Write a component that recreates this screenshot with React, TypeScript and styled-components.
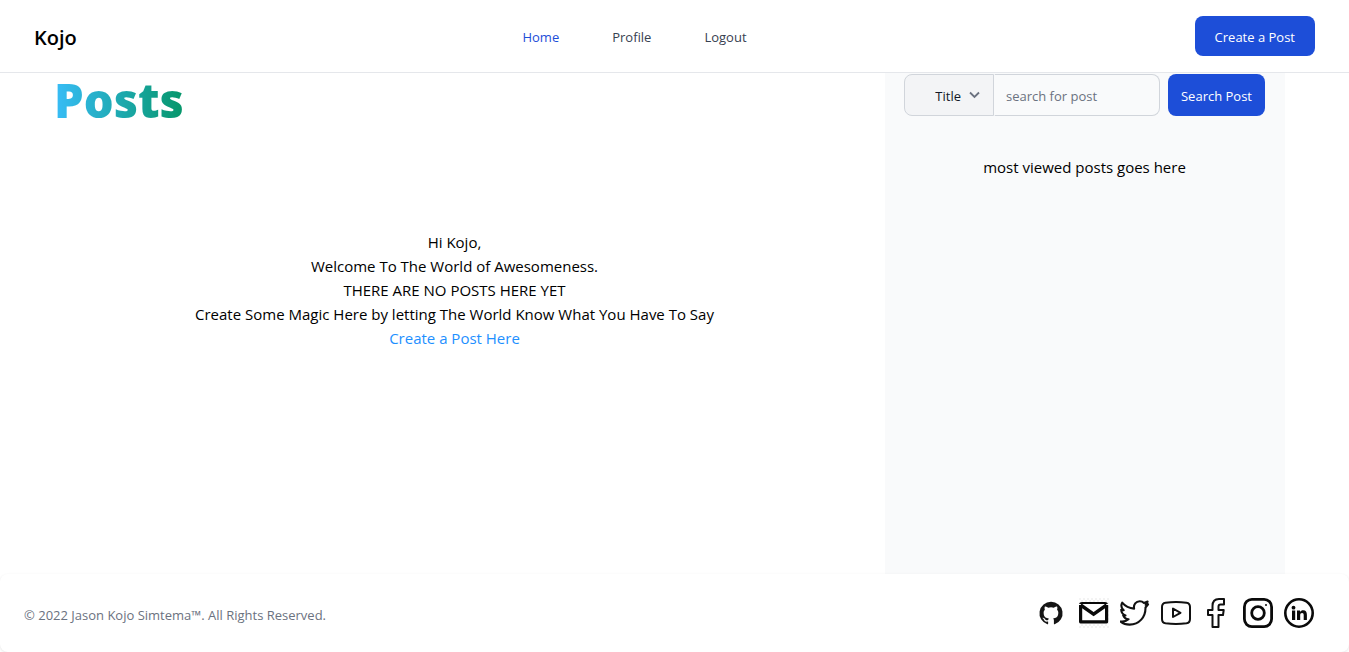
import React from "react";
import styled, { createGlobalStyle } from "styled-components";

const GlobalStyle = createGlobalStyle`
  *, *::before, *::after { box-sizing: border-box; }
  body {
    margin: 0;
    background: #fff;
    color: #000;
    font-family: "Segoe UI", "Open Sans", "Noto Sans", sans-serif;
    font-size: 15px;
    line-height: 24px;
  }
  a { text-decoration: none; color: inherit; }
  h1, p, ul { margin: 0; padding: 0; }
  button, input, select { font: inherit; margin: 0; }
`;

const Page = styled.div`
  display: flex;
  flex-direction: column;
  min-height: 100vh;
`;

const Header = styled.header`
  display: grid;
  grid-template-columns: 1fr auto 1fr;
  align-items: center;
  padding: 16px 34px;
  border-bottom: 1px solid #e5e7eb;
`;

const Brand = styled.a`
  padding-top: 4px;
  font-size: 20px;
  line-height: 28px;
  font-weight: 600;
  justify-self: start;
`;

const NavList = styled.ul`
  display: flex;
  gap: 53px;
  padding-right: 80px;
  list-style: none;
`;

const NavLink = styled.a<{ $active?: boolean }>`
  font-size: 13px;
  color: ${(p) => (p.$active ? "#1d4ed8" : "#374151")};
`;

const PrimaryButton = styled.button<{ $pad: number }>`
  min-height: 40px;
  padding: 2px ${(p) => p.$pad}px 0;
  border: 0;
  border-radius: 8px;
  background: #1d4ed8;
  color: #fff;
  font-size: 13px;
  line-height: 20px;
  white-space: nowrap;
  justify-self: end;
`;

const Main = styled.main`
  flex: 1;
  display: flex;
  padding: 0 64px 0 24px;
`;

const Feed = styled.section`
  flex: 1;
`;

const Title = styled.h1`
  width: fit-content;
  margin-left: 30px;
  font-size: 47px;
  line-height: 54px;
  font-weight: 800;
  color: transparent;
  background: linear-gradient(to right, #38bdf8, #059669);
  background-clip: text;
  -webkit-background-clip: text;
`;

const Welcome = styled.div`
  margin-top: 103px;
  text-align: center;
`;

const PostLink = styled.a`
  color: #1e90ff;
`;

const Sidebar = styled.aside`
  width: 400px;
  padding: 1px 20px 0 19px;
  background: #f9fafb;
  text-align: center;
`;

const SearchForm = styled.form`
  display: flex;
  margin-bottom: 39px;
`;

const SelectWrap = styled.div`
  display: grid;
  align-items: center;
  width: 90px;
  & > * { grid-area: 1 / 1; }
  svg { justify-self: end; margin-right: 12px; pointer-events: none; }
`;

const Select = styled.select`
  appearance: none;
  width: 100%;
  height: 42px;
  padding: 2px 32px 0 12px;
  border: 1px solid #d1d5db;
  border-radius: 8px 0 0 8px;
  background: #f3f4f6;
  color: #111827;
  font-size: 13px;
  text-align: right;
  text-align-last: right;
`;

const SearchInput = styled.input`
  flex: 1;
  min-width: 0;
  height: 42px;
  margin-right: 8px;
  padding: 2px 11px 0;
  border: 1px solid #d1d5db;
  border-left-color: #f9fafb;
  border-radius: 0 8px 8px 0;
  background: #f9fafb;
  font-size: 13px;
  &::placeholder { color: #6b7280; opacity: 1; }
`;

const Footer = styled.footer`
  display: flex;
  align-items: center;
  justify-content: space-between;
  min-height: 78px;
  padding: 0 35px 0 24px;
  border-radius: 8px;
  background: #fff;
  box-shadow: 0 1px 3px rgba(0, 0, 0, 0.1);
`;

const Copyright = styled.span`
  padding-top: 4px;
  font-size: 13px;
  line-height: 20px;
  color: #6b7280;
`;

const Social = styled.ul`
  display: flex;
  gap: 11px;
  list-style: none;
  svg { display: block; }
`;

const socials = [
  {
    name: "GitHub",
    art: (
      <path transform="translate(1.500 3.500) scale(.96)" fill="#151515" d="M12 .3a12 12 0 0 0-3.8 23.4c.6.1.8-.3.8-.6v-2.2c-3.3.7-4-1.4-4-1.4-.6-1.4-1.4-1.8-1.4-1.8-1-.7.1-.7.1-.7 1.2 0 1.9 1.2 1.9 1.2 1 1.8 2.8 1.3 3.5 1 0-.8.4-1.3.7-1.6-2.7-.3-5.5-1.3-5.5-6 0-1.2.5-2.3 1.3-3.1-.2-.4-.6-1.6 0-3.2 0 0 1-.3 3.4 1.2a11.5 11.5 0 0 1 6 0c2.300-1.500 3.300-1.200 3.300-1.200.6 1.600.2 2.800 0 3.200.9.8 1.300 1.900 1.300 3.200 0 4.600-2.800 5.600-5.500 5.900.5.4.9 1 .9 2.200v3.300c0 .3.1.7.8.6A12 12 0 0 0 12 .3" />
    ),
  },
  {
    name: "Email",
    art: (
      <>
        <defs>
          <pattern id="checks" width="4" height="4" patternUnits="userSpaceOnUse">
            <path d="M0 0h2v2H0zM2 2h2v2H2z" fill="#f3f3f3" />
          </pattern>
        </defs>
        <rect width="30" height="30" fill="url(#checks)" />
        <rect x="0" y="4" width="29" height="21.500" rx="2" fill="#fff" />
        <path d="M3 4h23q2.500 0 3 2H0Q.5 4 3 4z" fill="#0a0a0a" />
        <path d="M1.600 7v16.800h26V7" fill="none" stroke="#0a0a0a" strokeWidth="3.200" strokeLinejoin="round" />
        <path d="M1.600 7 14.600 16.200 27.600 7" fill="none" stroke="#0a0a0a" strokeWidth="3.400" />
      </>
    ),
  },
  {
    name: "Twitter",
    art: (
      <path d="M1.500 23.500c3 .4 5.800-.300 8-2.200-2.500-.200-4.500-1.700-5.300-3.900h2.300C4 16.500 2.300 14.300 2.200 11.700l2.500.600C2.500 10.300 1.800 7.300 3.200 4.700c3 3.600 7.100 5.700 11.900 5.900C14.300 6.500 17 3.200 20.700 3.200c1.700 0 3.200.700 4.300 1.800l3.600-1.400-1.900 3.200 2.400-.500-2.600 3.200c.200 9.600-6.300 17.100-15.900 17.100-3.400 0-6.500-1-9.100-3.100z" transform="translate(-1 0)" fill="none" stroke="#111" strokeWidth="2.100" strokeLinejoin="round" />
    ),
  },
  {
    name: "YouTube",
    art: (
      <g fill="none" stroke="#111" strokeWidth="2" strokeLinejoin="round">
        <path d="M4.500 4.700Q15 3.500 25.500 4.700Q29 5.200 29 9v12q0 3.800-3.500 4.300Q15 26.500 4.500 25.300Q1 24.800 1 21V9q0-3.800 3.500-4.300z" />
        <path d="M12 10.500v8.500l7.500-4.200z" />
      </g>
    ),
  },
  {
    name: "Facebook",
    art: (
      <path d="M10.500 29V17H6v-5h4.500V8C10.500 3.500 13 1 17 1h5v5.500h-3.500c-1.500 0-2 .7-2 2V12h5.200l-.7 5h-4.500v12z" fill="none" stroke="#111" strokeWidth="2" strokeLinejoin="round" />
    ),
  },
  {
    name: "Instagram",
    art: (
      <g fill="none" stroke="#0a0a0a" strokeWidth="2.800">
        <rect x="1.400" y="1.400" width="27.200" height="27.200" rx="7.500" />
        <circle cx="15" cy="15" r="6.300" />
        <circle cx="23" cy="7" r="1" fill="#0a0a0a" stroke="none" />
      </g>
    ),
  },
  {
    name: "LinkedIn",
    art: (
      <>
        <circle cx="15" cy="15" r="13.700" fill="none" stroke="#0a0a0a" strokeWidth="2.600" />
        <g fill="#0a0a0a">
          <circle cx="9.500" cy="9.700" r="1.900" />
          <rect x="8" y="12.500" width="3.200" height="9.500" />
          <path d="M13 12.500h3v1.400c.7-1.100 1.800-1.700 3.200-1.700 2.700 0 3.700 1.800 3.700 4.500V22h-3.200v-4.800c0-1.400-.4-2.300-1.600-2.300-1.300 0-1.900.9-1.900 2.300V22H13z" />
        </g>
      </>
    ),
  },
];

export default function App() {
  return (
    <Page>
      <GlobalStyle />
      <Header>
        <Brand href="#">Kojo</Brand>
        <nav>
          <NavList>
            <li><NavLink href="#" $active>Home</NavLink></li>
            <li><NavLink href="#profile">Profile</NavLink></li>
            <li><NavLink href="#logout">Logout</NavLink></li>
          </NavList>
        </nav>
        <PrimaryButton type="button" $pad={20}>Create a Post</PrimaryButton>
      </Header>
      <Main>
        <Feed>
          <Title>Posts</Title>
          <Welcome>
            <p>Hi Kojo,</p>
            <p>Welcome To The World of Awesomeness.</p>
            <p>THERE ARE NO POSTS HERE YET</p>
            <p>Create Some Magic Here by letting The World Know What You Have To Say</p>
            <PostLink href="#create">Create a Post Here</PostLink>
          </Welcome>
        </Feed>
        <Sidebar>
          <SearchForm onSubmit={(e) => e.preventDefault()}>
            <SelectWrap>
              <Select aria-label="Search by" defaultValue="title">
                <option value="title">Title</option>
                <option value="author">Author</option>
              </Select>
              <svg width="14" height="14" viewBox="0 0 14 14" aria-hidden="true">
                <path d="m2 4.500 4.500 4.500 4.500-4.500" fill="none" stroke="#6b7280" strokeWidth="1.800" />
              </svg>
            </SelectWrap>
            <SearchInput type="search" aria-label="Search" placeholder="search for post" />
            <PrimaryButton type="submit" $pad={13}>Search Post</PrimaryButton>
          </SearchForm>
          <p>most viewed posts goes here</p>
        </Sidebar>
      </Main>
      <Footer>
        <Copyright>© 2022 Jason Kojo Simtema™. All Rights Reserved.</Copyright>
        <Social>
          {socials.map((s) => (
            <li key={s.name}>
              <a href="#" aria-label={s.name}>
                <svg width="30" height="30" viewBox="0 0 30 30" aria-hidden="true">{s.art}</svg>
              </a>
            </li>
          ))}
        </Social>
      </Footer>
    </Page>
  );
}
